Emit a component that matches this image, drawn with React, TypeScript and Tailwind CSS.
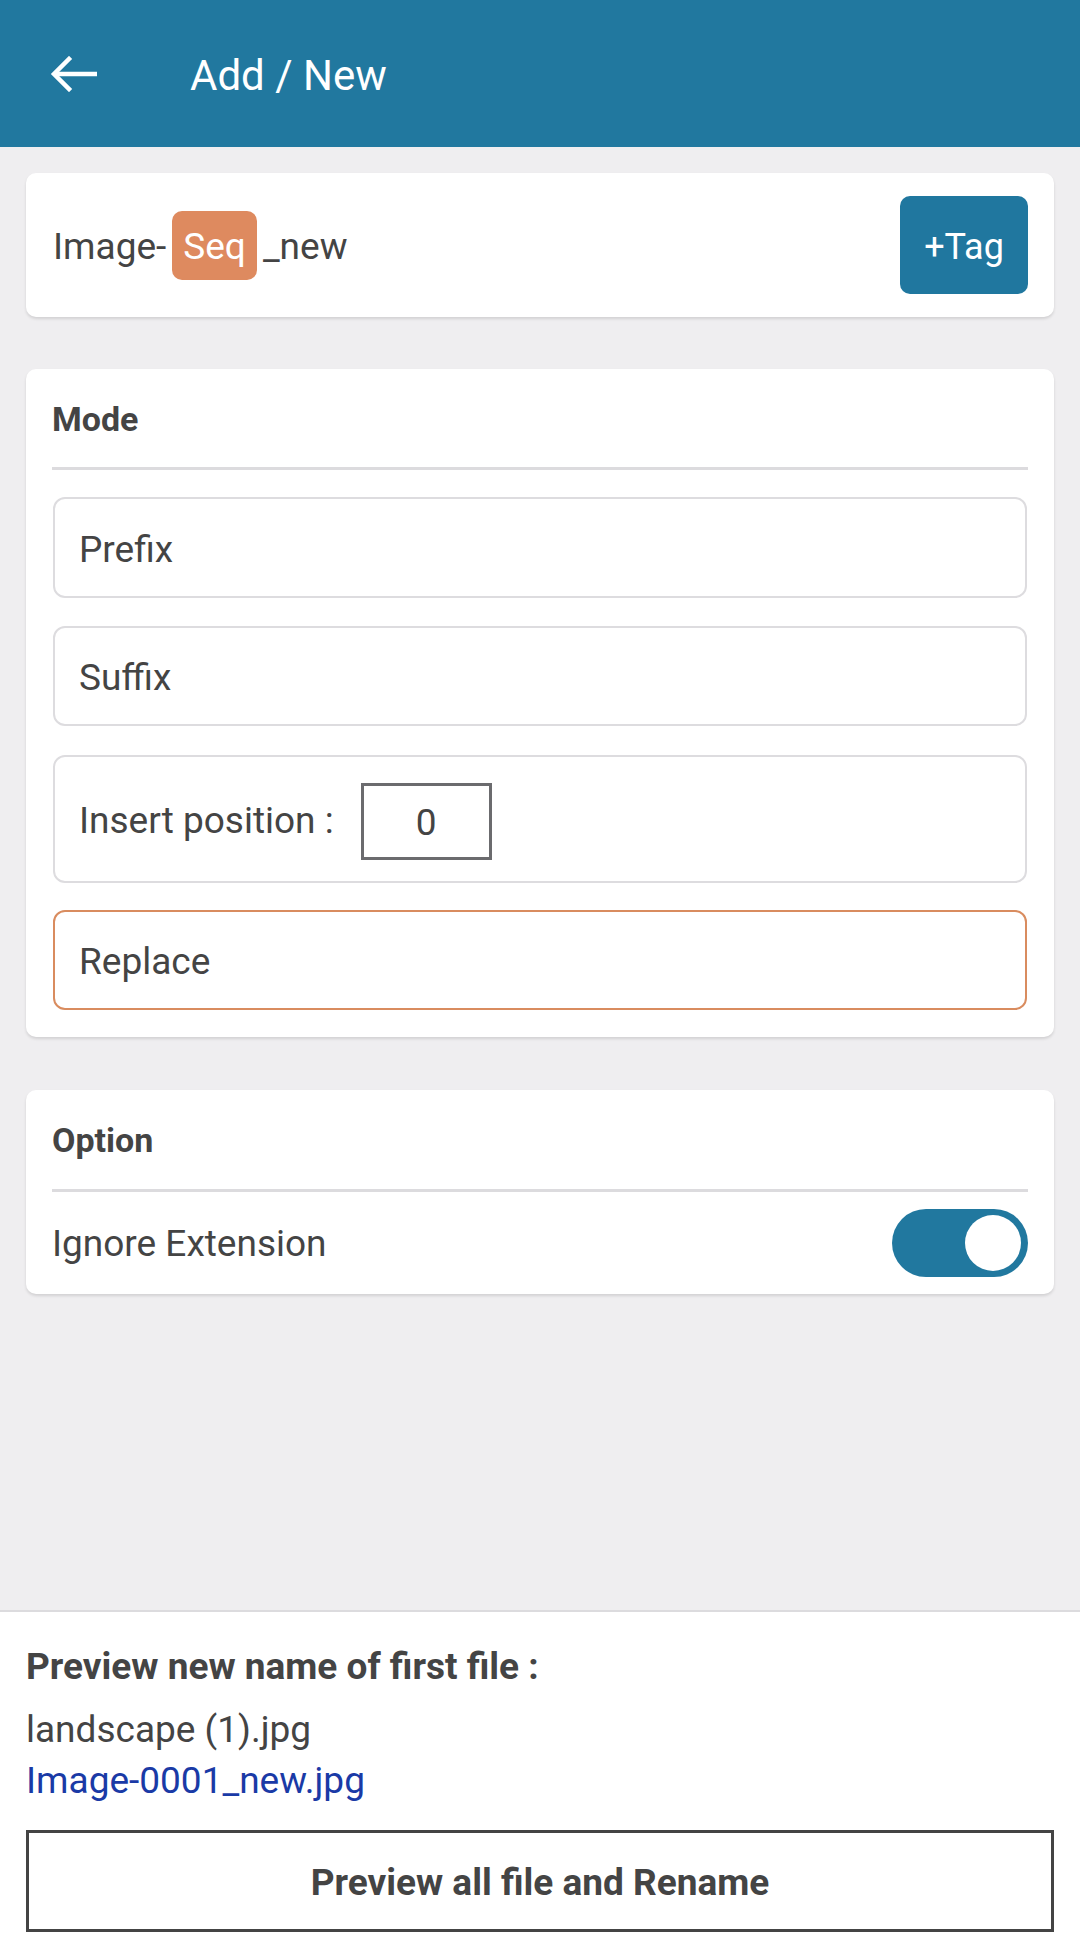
import React from "react";

function BackArrow() {
  return (
    <svg width="50" height="36" viewBox="0 0 50 36" fill="none">
      <path d="M48 18H5" stroke="white" strokeWidth="4.5" />
      <path d="M20 3L5 18L20 33" stroke="white" strokeWidth="4.5" strokeLinecap="square" />
    </svg>
  );
}

function ModeBox({ children, h, orange }: { children: React.ReactNode; h: string; orange?: boolean }) {
  return (
    <div
      className={`mx-[1px] flex items-center rounded-[12px] border-[2.5px] bg-white pl-[24px] pt-[4px] text-[37px] text-[#444444] ${h} ${
        orange ? "border-[#d98c5f]" : "border-[#dddcdf]"
      }`}
    >
      {children}
    </div>
  );
}

export default function App() {
  return (
    <div className="flex h-[1959px] w-[1080px] flex-col bg-[#efeef0] font-['Roboto',sans-serif]">
      <header className="flex h-[147px] shrink-0 items-center bg-[#21789f]">
        <div className="ml-[49px] flex items-center pt-[1px]">
          <BackArrow />
        </div>
        <h1 className="ml-[91px] pt-[4px] text-[42px] font-normal text-white">Add / New</h1>
      </header>

      <main className="flex flex-1 flex-col px-[26px] pt-[26px]">
        {/* name card */}
        <div className="flex h-[144px] items-center justify-between rounded-[10px] bg-white pl-[27px] pr-[26px] shadow-[0_2px_3px_rgba(0,0,0,0.12)]">
          <div className="flex items-center text-[37px] text-[#444444]">
            <span className="pt-[4px]">Image-</span>
            <span className="mx-[6px] flex h-[69px] items-center rounded-[10px] bg-[#de8a5f] px-[11px] pt-[4px] text-white">Seq</span>
            <span className="pt-[4px]">_new</span>
          </div>
          <button className="flex h-[98px] w-[128px] items-center justify-center rounded-[10px] bg-[#20779f] pt-[3px] text-[36px] text-white">
            +Tag
          </button>
        </div>

        {/* mode card */}
        <div className="mt-[52px] flex flex-col rounded-[10px] bg-white px-[26px] pb-[27px] shadow-[0_2px_3px_rgba(0,0,0,0.12)]">
          <div className="box-content flex h-[98px] items-center border-b-[3px] border-[#dcdbde]">
            <span className="pt-[3px] text-[34px] font-bold text-[#444444]">Mode</span>
          </div>
          <div className="mt-[27px] flex flex-col">
            <ModeBox h="h-[101px]">Prefix</ModeBox>
            <div className="mt-[28px]">
              <ModeBox h="h-[100px]">Suffix</ModeBox>
            </div>
            <div className="mt-[29px]">
              <ModeBox h="h-[128px]">
                <span>Insert position :</span>
                <div className="ml-[27px] flex h-[77px] w-[131px] items-center justify-center border-[3px] border-[#6b6b6e] pt-[3px] text-[37px] text-[#444444]">
                  0
                </div>
              </ModeBox>
            </div>
            <div className="mt-[27px]">
              <ModeBox h="h-[100px]" orange>
                Replace
              </ModeBox>
            </div>
          </div>
        </div>

        {/* option card */}
        <div className="mt-[53px] flex flex-col rounded-[10px] bg-white px-[26px] shadow-[0_2px_3px_rgba(0,0,0,0.12)]">
          <div className="box-content flex h-[99px] items-center border-b-[3px] border-[#dcdbde]">
            <span className="pt-[2px] text-[34px] font-bold text-[#444444]">Option</span>
          </div>
          <div className="flex h-[102px] items-center justify-between">
            <span className="pt-[2px] text-[37px] text-[#444444]">Ignore Extension</span>
            <div className="flex h-[68px] w-[136px] items-center justify-end rounded-full bg-[#21789f] pr-[7px]">
              <div className="h-[56px] w-[56px] rounded-full bg-white" />
            </div>
          </div>
        </div>
      </main>

      <footer className="flex h-[349px] shrink-0 flex-col border-t-[2px] border-[#dcdbde] bg-white px-[26px] pt-[35px]">
        <div className="h-[40px] text-[37px] font-bold leading-[40px] text-[#444444]">Preview new name of first file :</div>
        <div className="mt-[17px] h-[51px] text-[37px] leading-[51px] text-[#444444]">landscape (1).jpg</div>
        <div className="h-[51px] text-[37px] leading-[51px] text-[#1a3aa6]">Image-0001_new.jpg</div>
        <button className="mt-[24px] flex h-[102px] w-full items-center justify-center border-[3px] border-[#444444] bg-white pt-[3px] text-[37px] font-bold text-[#444444]">
          Preview all file and Rename
        </button>
      </footer>
    </div>
  );
}
